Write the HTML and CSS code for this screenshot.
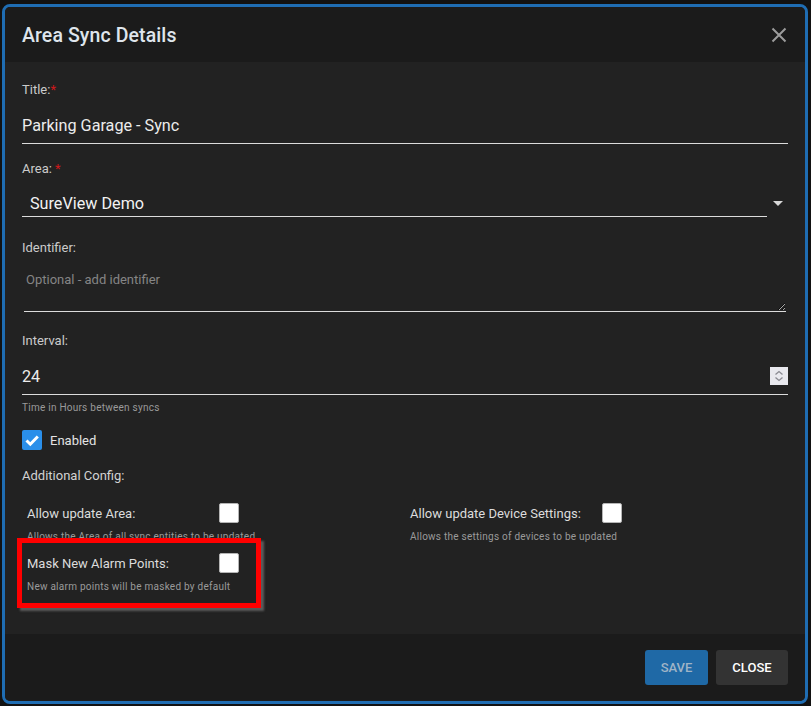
FILE: index.html
```html
<!DOCTYPE html>
<html lang="en">
<head>
<meta charset="utf-8">
<title>Area Sync Details</title>
<link rel="stylesheet" href="styles.css">
</head>
<body>
<div class="dialog">
  <header class="dlg-head">
    <h1 class="dlg-title">Area Sync Details</h1>
    <button class="dlg-x" aria-label="Close">
      <svg width="16" height="16" viewBox="0 0 16 16"><path d="M1.5 1.5 L14.5 14.5 M14.5 1.5 L1.5 14.5" stroke="#9c9c9c" stroke-width="2" fill="none"/></svg>
    </button>
  </header>
  <main class="dlg-body">
    <div class="field">
      <div class="label">Title:<span class="req">*</span></div>
      <div class="ctl ctl-text">Parking Garage - Sync</div>
    </div>
    <div class="field field-area">
      <div class="label">Area: <span class="req">*</span></div>
      <div class="select-row">
        <div class="ctl-select">SureView Demo</div>
        <span class="caret"></span>
      </div>
    </div>
    <div class="field field-id">
      <div class="label">Identifier:</div>
      <textarea class="ctl-area" placeholder="Optional - add identifier"></textarea>
    </div>
    <div class="field field-int">
      <div class="label">Interval:</div>
      <div class="ctl ctl-num">
        <span>24</span>
        <span class="spin">
          <svg width="18" height="18" viewBox="0 0 18 18"><path d="M5.5 7.5 L9 4.5 L12.5 7.5 M5.5 10.5 L9 13.5 L12.5 10.5" stroke="#8a8a92" stroke-width="1.3" fill="none"/></svg>
        </span>
      </div>
      <div class="help help-int">Time in Hours between syncs</div>
    </div>
    <label class="check-row">
      <span class="cb cb-on">
        <svg width="20" height="20" viewBox="0 0 20 20"><path d="M4.5 10.5 L8.3 14.2 L15.8 6.5" stroke="#fff" stroke-width="3" fill="none"/></svg>
      </span>
      <span class="check-text">Enabled</span>
    </label>
    <div class="label label-add">Additional Config:</div>
    <div class="cfg-grid">
      <div class="cfg">
        <div class="cfg-head"><span class="cfg-label">Allow update Area:</span><span class="cb"></span></div>
        <div class="help">Allows the Area of all sync entities to be updated</div>
      </div>
      <div class="cfg">
        <div class="cfg-head"><span class="cfg-label">Allow update Device Settings:</span><span class="cb"></span></div>
        <div class="help">Allows the settings of devices to be updated</div>
      </div>
      <div class="cfg cfg-mask">
        <div class="cfg-head"><span class="cfg-label">Mask New Alarm Points:</span><span class="cb"></span></div>
        <div class="help">New alarm points will be masked by default</div>
        <div class="highlight"></div>
      </div>
    </div>
  </main>
  <footer class="dlg-foot">
    <button class="btn btn-save">Save</button>
    <button class="btn btn-close">Close</button>
  </footer>
</div>
</body>
</html>
```

FILE: styles.css
```css
* { box-sizing: border-box; }
html, body { margin: 0; padding: 0; }
body {
  background: #121212;
  width: 811px;
  height: 706px;
  padding: 4px 3px 2px 2px;
  font-family: Roboto, "Liberation Sans", sans-serif;
  overflow: hidden;
}
.dialog {
  width: 806px;
  height: 700px;
  border: 3px solid #1f6db3;
  border-radius: 8px;
  overflow: hidden;
  display: flex;
  flex-direction: column;
  background: #222222;
}
.dlg-head {
  height: 55px;
  flex: none;
  background: #1b1b1b;
  display: flex;
  align-items: center;
  justify-content: space-between;
  padding: 1px 18px 0 17px;
}
.dlg-title {
  margin: 0;
  font-size: 19.5px;
  font-weight: 500;
  color: #dfe5ec;
  letter-spacing: 0.1px;
}
.dlg-x {
  background: none;
  border: 0;
  padding: 0;
  width: 16px;
  height: 16px;
  display: flex;
}
.dlg-body {
  flex: 1;
  background: #222222;
  padding: 20px 17px 0 17px;
  display: flex;
  flex-direction: column;
}
.field { display: flex; flex-direction: column; }
.label {
  font-size: 13px;
  line-height: 16px;
  color: #cbcbcb;
}
.req { color: #d0181b; }
.ctl {
  margin-top: 10px;
  height: 36px;
  border-bottom: 1px solid #dcdcdc;
  font-size: 16.2px;
  color: #ececec;
  display: flex;
  align-items: center;
  padding-bottom: 1px;
}
.field-area { margin-top: 17px; }
.select-row {
  margin-top: 14px;
  display: flex;
  align-items: center;
}
.ctl-select {
  flex: 1;
  height: 26px;
  border-bottom: 1px solid #dcdcdc;
  font-size: 16.2px;
  line-height: 25px;
  color: #f2f2f2;
  padding-left: 8px;
}
.caret {
  width: 0;
  height: 0;
  border-left: 5px solid transparent;
  border-right: 5px solid transparent;
  border-top: 5px solid #d8d8d8;
  margin: 0 5px 1px 6px;
}
.field-id { margin-top: 23px; }
.ctl-area {
  margin: 8px 2px 0 2px;
  height: 48px;
  background: transparent;
  border: 0;
  border-bottom: 1px solid #dcdcdc;
  outline: none;
  resize: vertical;
  font-family: Roboto, "Liberation Sans", sans-serif;
  font-size: 13px;
  line-height: 16px;
  padding: 8px 2px 0 2px;
  color: #ddd;
  color-scheme: dark;
}
.ctl-area::placeholder { color: #858585; }
.field-int { margin-top: 21px; }
.ctl-num { justify-content: space-between; }
.spin {
  width: 18px;
  height: 18px;
  background: #e8e8ee;
  display: flex;
}
.help {
  font-size: 10px;
  line-height: 12px;
  color: #9a9a9a;
  letter-spacing: 0.25px;
}
.help-int { margin-top: 7px; }
.check-row {
  margin-top: 16px;
  display: flex;
  align-items: center;
  height: 20px;
}
.cb {
  width: 20px;
  height: 20px;
  flex: none;
  border-radius: 2px;
  background: #ffffff;
  border: 1px solid #b5b5b5;
  display: flex;
}
.cb-on { background: #2a8fea; border: 0; }
.check-text {
  margin-left: 8px;
  font-size: 13px;
  color: #e4e4e4;
}
.label-add { margin-top: 18px; color: #d2d2d2; }
.cfg-grid {
  margin-top: 19px;
  display: grid;
  grid-template-columns: 383px 383px;
  row-gap: 10px;
}
.cfg { padding-left: 5px; position: relative; }
.cfg-head {
  display: flex;
  align-items: center;
  height: 20px;
}
.cfg-label {
  width: 192px;
  font-size: 13px;
  color: #dcdcdc;
}
.cfg .help { margin-top: 8px; }
.highlight {
  position: absolute;
  left: -5px;
  top: -15px;
  width: 244px;
  height: 70px;
  border: 5px solid #ff0000;
  box-shadow: 3px 3px 2px rgba(110, 110, 110, 0.75);
  pointer-events: none;
}
.dlg-foot {
  height: 67px;
  flex: none;
  background: #1b1b1b;
  display: flex;
  justify-content: flex-end;
  align-items: flex-start;
  padding: 16px 17px 0 0;
  gap: 8px;
}
.btn {
  height: 35px;
  border: 0;
  border-radius: 3px;
  font-family: Roboto, "Liberation Sans", sans-serif;
  font-size: 13px;
  font-weight: 500;
  text-transform: uppercase;
  padding: 0;
}
.btn-save { background: #1f69a6; color: #9fb4c6; width: 63px; }
.btn-close { background: #333333; color: #ffffff; width: 72px; }
```
